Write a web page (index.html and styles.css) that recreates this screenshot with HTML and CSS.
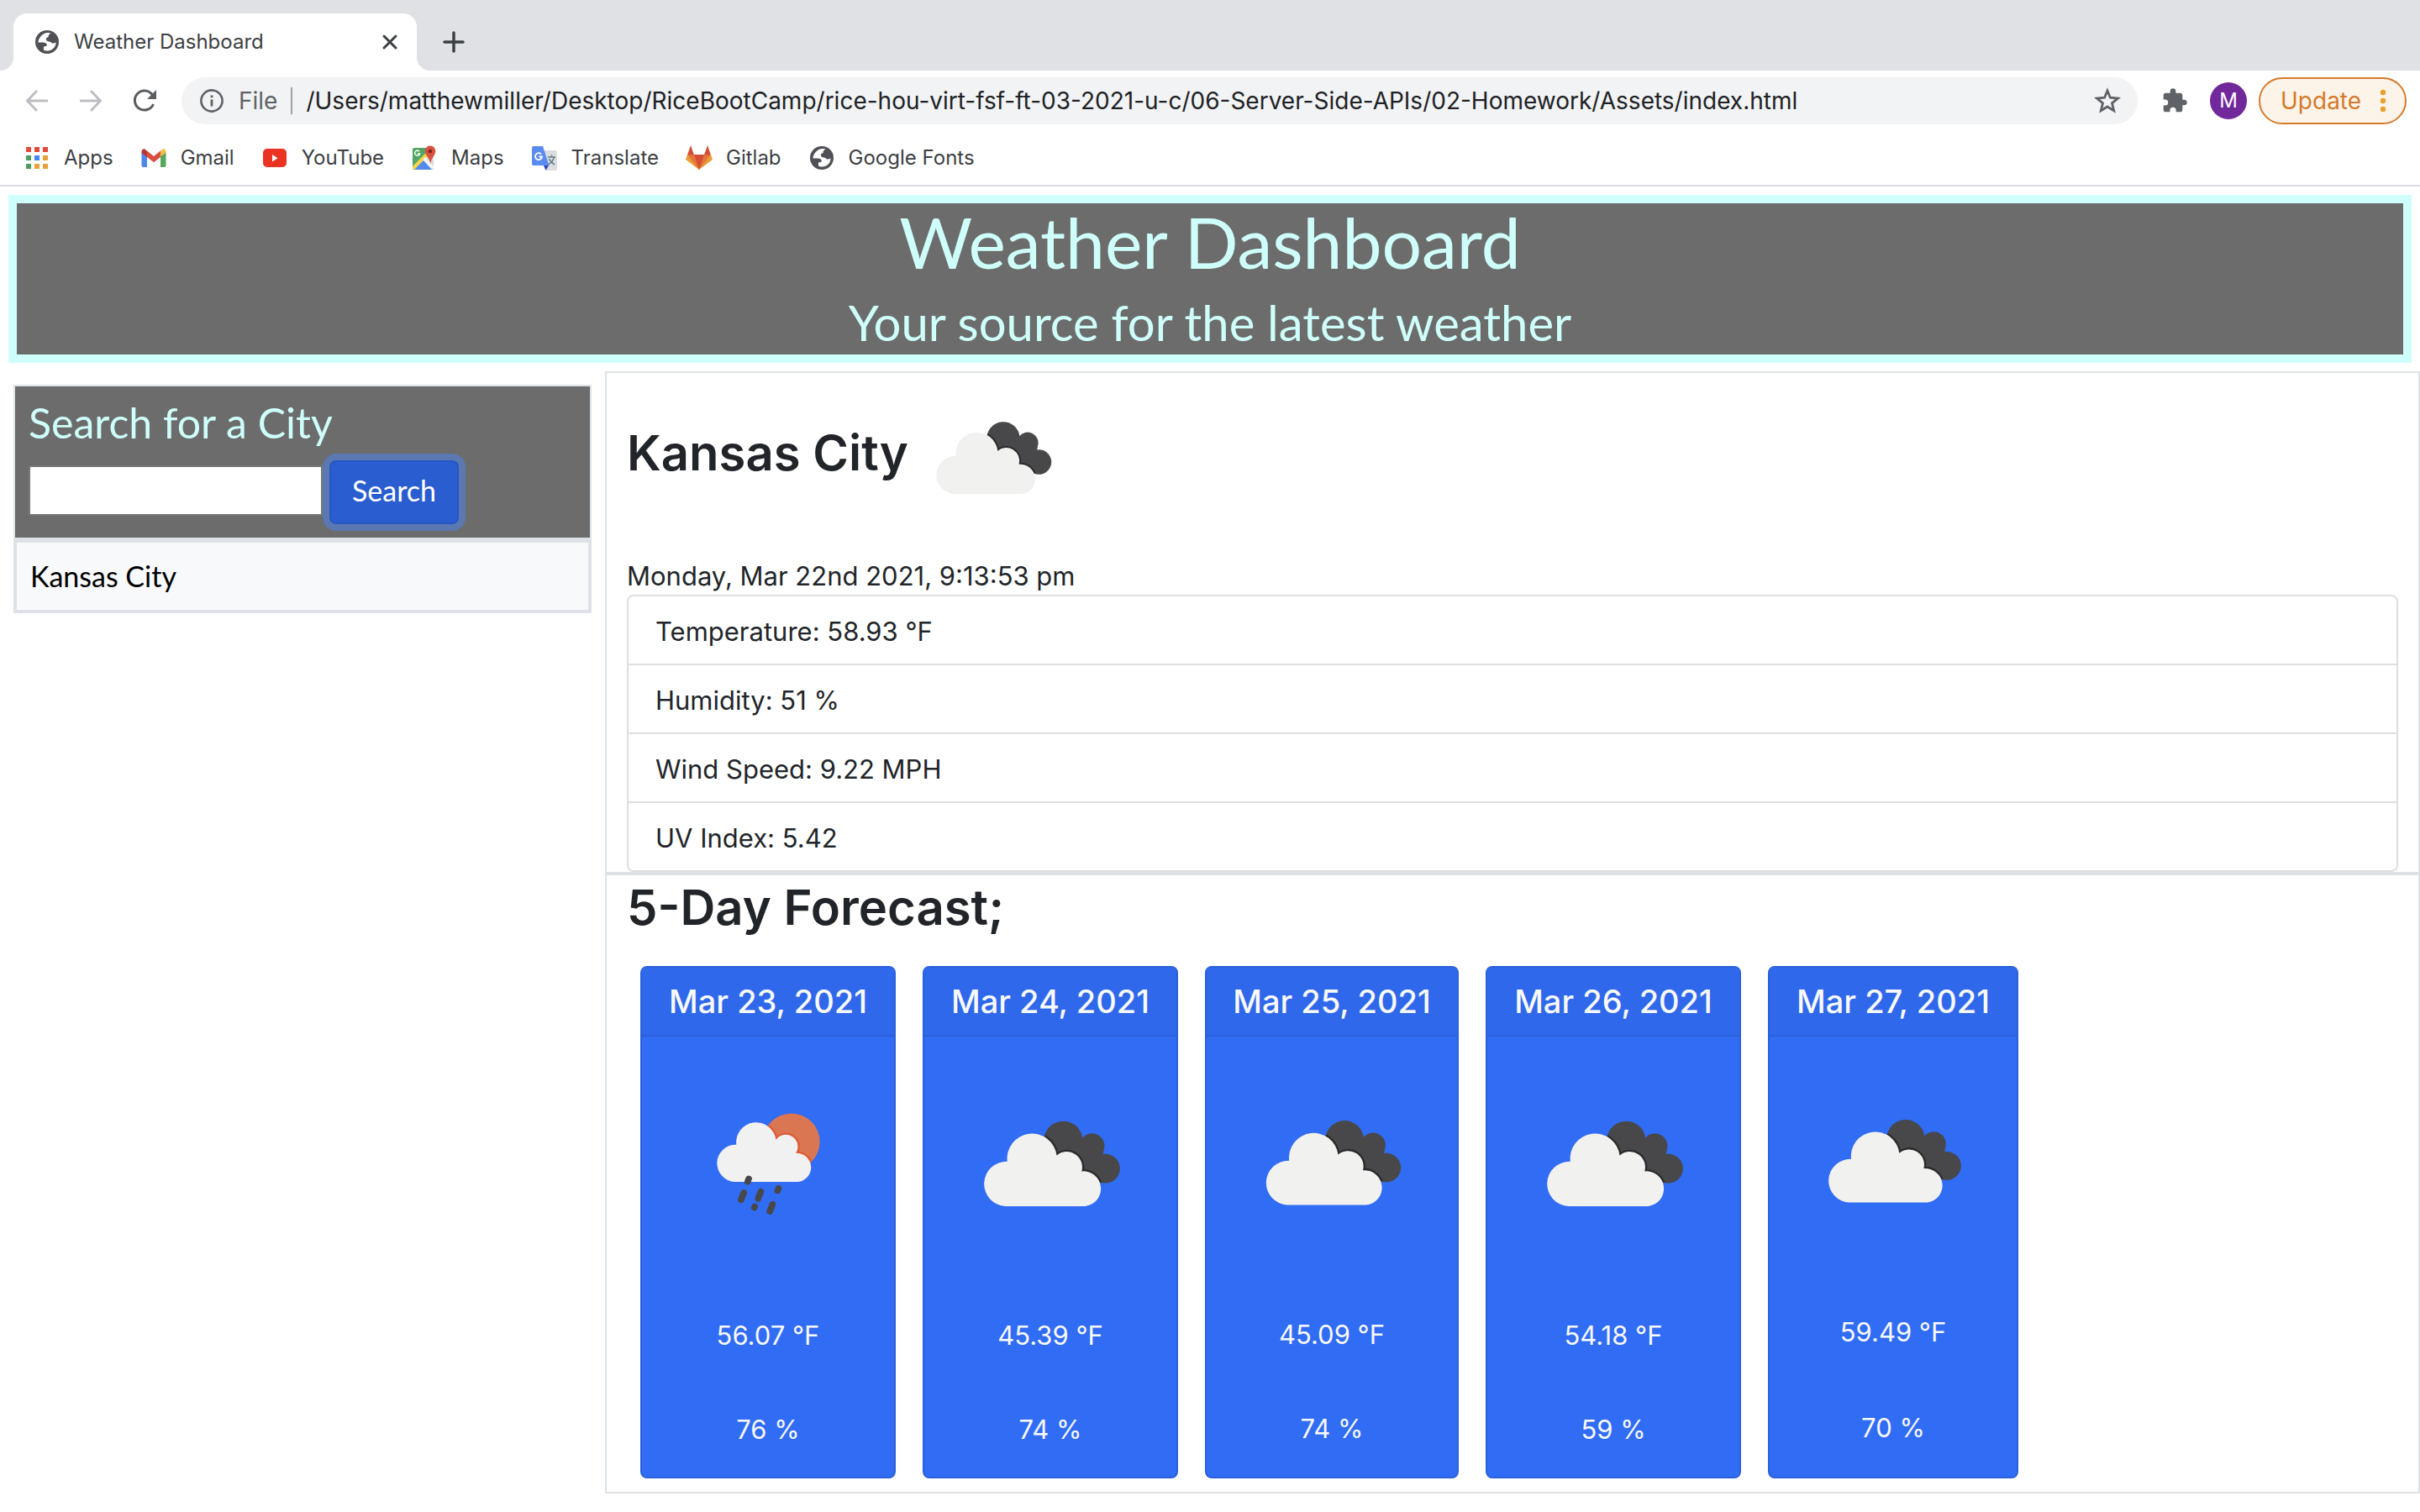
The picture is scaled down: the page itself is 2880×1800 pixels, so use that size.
FILE: index.html
```html
<!DOCTYPE html>
<html lang="en">
<head>
<meta charset="utf-8">
<title>Weather Dashboard</title>
<link rel="stylesheet" href="styles.css">
</head>
<body>
<svg class="defs" width="0" height="0" aria-hidden="true">
  <defs>
    <symbol id="globe" viewBox="0 0 28 28">
      <circle cx="14" cy="14" r="14" fill="#4f5157"/>
      <path d="M18.500 3.600C16 2.600 12 2.800 9 5C5.500 7.500 3.500 11 3.400 14.600H9.500C12 14.600 13.800 16 13.800 17.600C13.800 19 12.500 19.300 10 19.300V23.500C12 24.800 16 25 19 23.400C22.500 21.500 24.600 18 24.600 14.400C23 15.500 21 15.800 19.500 15.200C18 14.600 18.300 13.600 16.500 13.600C14 13.400 12.800 12 12.800 10.500C12.800 9 14 8.500 15.500 8.200C15.200 6 16.500 5 18.500 3.600Z" fill="#fff"/>
    </symbol>
    <symbol id="clouds" viewBox="0 0 100 100">
      <clipPath id="back-cloud">
        <path d="M46.700 38.700a9.800 9.800 0 0 1 19.500-1.200A6.300 6.300 0 0 1 77 43.500L76.600 45.700A7.400 7.400 0 1 1 73 58.700L64 66 48 52z"/>
      </clipPath>
      <g clip-path="url(#back-cloud)">
        <rect width="100" height="100" fill="#48484a"/>
        <path class="cloud-shade" d="M27.400 72a11 11 0 0 1 .900-22.500A12.500 12.500 0 0 1 53.200 46.400A7.800 7.800 0 0 1 65.800 54.400A8.800 8.800 0 0 1 67.500 72z"/>
      </g>
      <path d="M27.400 72a11 11 0 0 1 .900-22.500A12.500 12.500 0 0 1 53.200 46.400A7.800 7.800 0 0 1 65.800 54.400A8.800 8.800 0 0 1 67.500 72z" fill="#f1f1f0"/>
    </symbol>
    <symbol id="sun-rain" viewBox="0 0 100 100">
      <clipPath id="sun-disc"><circle cx="61.800" cy="39.500" r="14.300"/></clipPath>
      <g clip-path="url(#sun-disc)">
        <rect width="100" height="100" fill="#db7653"/>
        <path class="sun-shade" d="M33.300 59.700a9 9 0 0 1 .700-18.700A10 10 0 0 1 54 38.600A6 6 0 0 1 64 45.300A7.200 7.200 0 0 1 65 59.700z"/>
      </g>
      <path d="M33.300 59.700a9 9 0 0 1 .700-18.700A10 10 0 0 1 54 38.600A6 6 0 0 1 64 45.300A7.200 7.200 0 0 1 65 59.700z" fill="#f1f1f2"/>
      <path d="M40.300 58.200l-.600 1.400M37.800 65.200l-1.400 3.600M46.400 64.600l-1.400 3.600M43.300 72.200l-.200.500M55.300 63l-.500 1.200M52.300 71l-1.400 3.600" stroke="#48484a" stroke-width="3.200" stroke-linecap="round" fill="none"/>
    </symbol>
  </defs>
</svg>

<div class="browser">
  <div class="tabstrip">
    <div class="tab">
      <svg class="icon-28" aria-hidden="true"><use href="#globe"/></svg>
      <span class="tab-title">Weather Dashboard</span>
      <button class="plain" aria-label="Close tab"><svg width="20" height="20" viewBox="0 0 20 20"><path d="M3 3L17 17M17 3L3 17" stroke="#3c4043" stroke-width="3" stroke-linecap="round"/></svg></button>
    </div>
    <button class="plain" aria-label="New tab"><svg width="28" height="28" viewBox="0 0 28 28"><path d="M14 3V25M3 14H25" stroke="#3c4043" stroke-width="3.500" stroke-linecap="round"/></svg></button>
  </div>

  <div class="toolbar">
    <div class="nav">
      <button class="plain" aria-label="Back"><svg width="32" height="32" viewBox="0 0 32 32"><path d="M29 16H5M16 4L4.500 16L16 28" fill="none" stroke="#bbbdc0" stroke-width="2.800"/></svg></button>
      <button class="plain" aria-label="Forward"><svg width="32" height="32" viewBox="0 0 32 32"><path d="M3 16H27M16 4L27.500 16L16 28" fill="none" stroke="#bbbdc0" stroke-width="2.800"/></svg></button>
      <button class="plain" aria-label="Reload"><svg width="32" height="32" viewBox="0 0 32 32"><path d="M26.500 20A11.500 11.500 0 1 1 25 8.500" fill="none" stroke="#5a5d61" stroke-width="3"/><path d="M30 3V14H19Z" fill="#5a5d61"/></svg></button>
    </div>
    <div class="omnibox">
      <svg class="icon-28" viewBox="0 0 28 28" aria-hidden="true"><circle cx="14" cy="14" r="12.600" fill="none" stroke="#5f6368" stroke-width="2.600"/><path d="M14 12.500V20.500M14 7.500V10.200" stroke="#5f6368" stroke-width="2.800"/></svg>
      <span class="scheme">File</span>
      <input class="url" type="text" aria-label="Address" value="/Users/matthewmiller/Desktop/RiceBootCamp/rice-hou-virt-fsf-ft-03-2021-u-c/06-Server-Side-APIs/02-Homework/Assets/index.html">
      <button class="plain" aria-label="Bookmark this page"><svg width="32" height="32" viewBox="0 0 32 32"><path d="M16 4L19.400 12.200L28.500 13L21.500 18.800L23.700 27.800L16 23L8.300 27.800L10.500 18.800L3.500 13L12.600 12.200Z" fill="none" stroke="#5f6368" stroke-width="2.800"/></svg></button>
    </div>
    <button class="plain" aria-label="Extensions"><svg width="32" height="32" viewBox="0 0 24 24"><path d="M20.500 11H19V7c0-1.100-.9-2-2-2h-4V3.500a2.500 2.500 0 0 0-5 0V5H4c-1.100 0-2 .9-2 2v3.800h1.500a2.700 2.700 0 0 1 0 5.400H2V20c0 1.100.9 2 2 2h3.800v-1.500a2.700 2.700 0 0 1 5.400 0V22H17c1.100 0 2-.9 2-2v-4h1.500a2.500 2.500 0 0 0 0-5z" fill="#5f6368"/></svg></button>
    <button class="avatar" aria-label="Profile">M</button>
    <button class="update"><span>Update</span><svg width="8" height="28" viewBox="0 0 8 28" aria-hidden="true"><g fill="#e8a02e"><circle cx="4" cy="4" r="3.200"/><circle cx="4" cy="14" r="3.200"/><circle cx="4" cy="24" r="3.200"/></g></svg></button>
  </div>

  <nav class="bookmarks" aria-label="Bookmarks">
    <a href="#"><svg viewBox="0 0 32 32"><g fill="#e24b3b"><path d="M3 3h6v6H3zM13 3h6v6h-6zM23 3h6v6h-6z"/></g><path d="M3 13h6v6H3zM3 23h6v6H3z" fill="#4f9d5b"/><path d="M13 13h6v6h-6z" fill="#4285f4"/><path d="M23 13h6v6h-6zM13 23h6v6h-6zM23 23h6v6h-6z" fill="#e6a33b"/></svg>Apps</a>
    <a href="#"><svg viewBox="0 0 32 32"><path d="M1.500 9V25a2 2 0 0 0 2 2H8V14z" fill="#4f86ec"/><path d="M30.500 9V25a2 2 0 0 1-2 2H24V14z" fill="#58a55c"/><path d="M24 14V8l1.500-1.500C27.500 4 30.500 6 30.500 8.500V10z" fill="#f2be42"/><path d="M8 7.500l8 6.500 8-6.500V15l-8 6.300L8 15z" fill="#d95040"/><path d="M8 15V8L6.500 6.500C4.500 4 1.500 6 1.500 8.500V10z" fill="#b6362b"/></svg>Gmail</a>
    <a href="#"><svg viewBox="0 0 32 32"><rect x="2" y="5" width="28" height="22" rx="5" fill="#ea3323"/><path d="M13 12V20.500L19.500 16.200Z" fill="#fff"/></svg>YouTube</a>
    <a href="#"><svg viewBox="0 0 32 32"><clipPath id="map-tile"><rect x="2" y="4" width="25" height="26" rx="2"/></clipPath><g clip-path="url(#map-tile)"><rect x="2" y="4" width="25" height="26" fill="#53a564"/><path d="M27 14V30L14 18L22 9Z" fill="#d8dade"/><path d="M2 30L16 16L28 30Z" fill="#5189ee"/><path d="M2 26L21 7L24 10L4 30H2Z" fill="#f7d44c"/><path d="M14 18L17 15L29 28V32H27Z" fill="#f4f4f4"/></g><path d="M23 1.500A6.200 6.200 0 0 1 29.300 8C29.300 13 24.500 15 23.300 23C22 15 16.800 13 16.800 8A6.200 6.200 0 0 1 23 1.500Z" fill="#d8503f"/><circle cx="23" cy="8" r="2.300" fill="#7c2219"/><path d="M10 8.300A3 3 0 1 0 10.600 11H8" fill="none" stroke="#fff" stroke-width="1.400"/></svg>Maps</a>
    <a href="#"><svg viewBox="0 0 32 32"><path d="M12 7H29a2 2 0 0 1 2 2V29a2 2 0 0 1-2 2H18Z" fill="#dcdddf"/><path d="M20 15H29M24.500 12.500V15M27.500 15C26.500 19 24 22 20 24M21.500 17C23 20.500 25.500 22.500 28 24" stroke="#647f8e" stroke-width="1.500" fill="none"/><path d="M15 25H21L17.500 31Z" fill="#3742b5"/><path d="M3 2H14L21.500 25H3a2 2 0 0 1-2-2V4a2 2 0 0 1 2-2Z" fill="#5a8bee"/><path d="M12 11.500A4 4 0 1 0 13 14.500H9.500" stroke="#fff" stroke-width="1.900" fill="none"/></svg>Translate</a>
    <a href="#"><svg viewBox="0 0 32 32"><path d="M16 30L0 18L2 12H30L32 18Z" fill="#eb9c3a"/><path d="M16 30L3 13L6 12H26L29 13Z" fill="#e57438"/><path d="M16 30L10 12H22Z" fill="#d24f33"/><path d="M2 12.500L6 1L10 12.500ZM22 12.500L26 1L30 12.500Z" fill="#d24f33"/></svg>Gitlab</a>
    <a href="#"><svg viewBox="-2 -2 32 32"><use href="#globe" width="28" height="28"/></svg>Google Fonts</a>
  </nav>
</div>

<header class="banner">
  <h1>Weather Dashboard</h1>
  <p>Your source for the latest weather</p>
</header>

<main class="layout">
  <aside class="sidebar">
    <div class="search-card">
      <form class="search">
        <label for="city">Search for a City</label>
        <div class="search-row">
          <input id="city" type="text">
          <button class="search-button" type="button">Search</button>
        </div>
      </form>
      <ul class="history">
        <li><button class="history-item">Kansas City</button></li>
      </ul>
    </div>
  </aside>

  <div class="content">
    <section class="panel">
      <h2 class="city">Kansas City<svg role="img" aria-label="Broken clouds"><use href="#clouds"/></svg></h2>
      <p class="date">Monday, Mar 22nd 2021, 9:13:53 pm</p>
      <ul class="readings">
        <li>Temperature: 58.93 °F</li>
        <li>Humidity: 51 %</li>
        <li>Wind Speed: 9.22 MPH</li>
        <li>UV Index: 5.42</li>
      </ul>
    </section>

    <section class="panel">
      <h2>5-Day Forecast;</h2>
      <div class="forecast">
        <article class="day"><h3>Mar 23, 2021</h3><div class="sky"><svg viewBox="0 0 100 100" role="img" aria-label="Rain"><use href="#sun-rain"/></svg></div><p>56.07 °F</p><p>76 %</p></article>
        <article class="day"><h3>Mar 24, 2021</h3><div class="sky"><svg viewBox="0 0 100 100" role="img" aria-label="Broken clouds"><use href="#clouds"/></svg></div><p>45.39 °F</p><p>74 %</p></article>
        <article class="day"><h3>Mar 25, 2021</h3><div class="sky"><svg viewBox="0 0 100 100" role="img" aria-label="Broken clouds"><use href="#clouds"/></svg></div><p>45.09 °F</p><p>74 %</p></article>
        <article class="day"><h3>Mar 26, 2021</h3><div class="sky"><svg viewBox="0 0 100 100" role="img" aria-label="Broken clouds"><use href="#clouds"/></svg></div><p>54.18 °F</p><p>59 %</p></article>
        <article class="day"><h3>Mar 27, 2021</h3><div class="sky"><svg viewBox="0 0 100 100" role="img" aria-label="Broken clouds"><use href="#clouds"/></svg></div><p>59.49 °F</p><p>70 %</p></article>
      </div>
    </section>
  </div>
</main>
</body>
</html>
```
FILE: styles.css
```css
*, *::before, *::after { box-sizing: border-box; }

body {
  margin: 0;
  background: #fff;
  color: #212529;
  font-family: Inter, "Liberation Sans", sans-serif;
  font-size: 31px;
  line-height: 48px;
}

h1, h2, h3, p, ul { margin: 0; padding: 0; font-weight: 400; }
ul { list-style: none; }
button, input { font: inherit; color: inherit; margin: 0; }
svg { display: block; flex: none; }
.defs { position: absolute; }

.plain { display: flex; padding: 0; border: 0; background: none; }
.icon-28 { width: 28px; height: 28px; }

/* Browser frame */
.browser { border-bottom: 2px solid #dadce0; color: #3c4043; font-size: 24px; line-height: 32px; }

.tabstrip { display: flex; gap: 30px; height: 84px; padding: 16px 16px 0; background: #dfe1e5; }
.tabstrip > .plain { align-items: center; }
.tab {
  position: relative;
  display: flex;
  align-items: center;
  gap: 18px;
  width: 480px;
  padding: 0 22px 0 26px;
  border-radius: 16px 16px 0 0;
  background: #fff;
}
.tab::before, .tab::after { content: ""; position: absolute; bottom: 0; width: 16px; height: 16px; }
.tab::before { right: 100%; background: radial-gradient(circle at 0 0, #dfe1e5 16px, #fff 16px); }
.tab::after { left: 100%; background: radial-gradient(circle at 100% 0, #dfe1e5 16px, #fff 16px); }
.tab-title { flex: 1; }

.toolbar { display: flex; align-items: center; padding: 8px 16px; font-size: 28px; }
.nav { display: flex; gap: 32px; width: 200px; padding-left: 12px; }
.omnibox {
  display: flex;
  flex: 1;
  align-items: center;
  height: 56px;
  margin-right: 28px;
  padding: 0 20px 0 22px;
  border-radius: 28px;
  background: #f1f3f4;
}
.scheme { margin: 0 16px 0 18px; color: #5f6368; }
.url {
  flex: 1;
  height: 32px;
  padding: 0 0 0 16px;
  border: 0;
  border-left: 2px solid #9fa2a6;
  background: none;
  color: #202124;
}
.avatar {
  width: 44px;
  height: 44px;
  margin: 0 14px 0 26px;
  padding: 0;
  border: 0;
  border-radius: 50%;
  background: #70289a;
  color: #fff;
  font-size: 24px;
}
.update {
  display: flex;
  align-items: center;
  justify-content: space-between;
  width: 176px;
  height: 56px;
  padding: 0 22px 0 24px;
  border: 2px solid #d57a2c;
  border-radius: 28px;
  background: #fcf4e9;
  color: #d57a2c;
}

.bookmarks { display: flex; gap: 32px; height: 64px; padding: 0 28px; align-items: center; }
.bookmarks a { display: flex; align-items: center; gap: 16px; color: inherit; text-decoration: none; }
.bookmarks svg { width: 32px; height: 32px; }

/* Page banner */
.banner {
  margin: 10px;
  padding-bottom: 4px;
  border: 10px solid #cffffa;
  background: #6c6c6c;
  color: #cffffa;
  font-family: Lato, sans-serif;
  text-align: center;
}
.banner h1 { margin-bottom: 16px; font-size: 84px; line-height: 92px; }
.banner p { font-size: 58px; line-height: 68px; }

.layout { display: grid; grid-template-columns: 1fr 3fr; align-items: start; }

/* City search */
.sidebar { padding: 16px; font-family: Lato, sans-serif; font-size: 34px; }
.search-card { border: 2px solid #dee2e6; background: #dee2e6; }
.search { padding: 16px; background: #6c6c6c; }
.search label { display: block; margin-bottom: 18px; color: #cffffa; font-size: 50px; line-height: 54px; }
.search-row { display: flex; align-items: center; gap: 8px; }
.search-row input { width: 350px; height: 60px; margin-bottom: 4px; padding: 2px 4px; border: 2px solid #767676; background: #fff; color: #212529; }
.search-button {
  width: 154px;
  height: 76px;
  padding: 0 0 4px;
  border: 2px solid #2656c4;
  border-radius: 8px;
  background: #2a5dcf;
  box-shadow: 0 0 0 8px #5b78b0;
  color: #fff;
}
.history { border-top: 4px solid #dee2e6; }
.history-item {
  display: block;
  width: 100%;
  padding: 16px;
  border: 2px solid #dee2e6;
  background: #f8f9fa;
  color: #000;
  text-align: left;
}

/* Weather panels */
.panel { padding: 0 24px; border: 2px solid #dee2e6; }
.panel h2 { margin-bottom: 16px; font-size: 58px; font-weight: 600; line-height: 76px; }
.city svg { display: inline-block; width: 200px; height: 200px; vertical-align: middle; }
.date { padding-top: 4px; line-height: 44px; }

.readings { border: 2px solid #dfdfdf; border-radius: 8px; }
.readings li { padding: 18px 32px 14px; }
.readings li + li { border-top: 2px solid #dfdfdf; }

.forecast { display: grid; grid-template-columns: 304px 304px 302px 304px 298px; gap: 32px; padding: 16px; }
.day {
  display: flex;
  flex-direction: column;
  border: 2px solid #2b60d9;
  border-radius: 8px;
  background: #316cf4;
  color: #f8f9fa;
  text-align: center;
}
.day h3 {
  padding: 16px 0;
  border-bottom: 2px solid #2b60d9;
  background: #2f68ea;
  font-size: 38px;
  font-weight: 500;
}
.day .sky, .day p { flex: 1 1 auto; padding: 32px; }
.day .sky svg { width: 100%; }

.cloud-shade { fill: #48484a; stroke: #2a2a2b; stroke-width: 2; }
.sun-shade { fill: #db7653; stroke: #de5a33; stroke-width: 2; }
```
